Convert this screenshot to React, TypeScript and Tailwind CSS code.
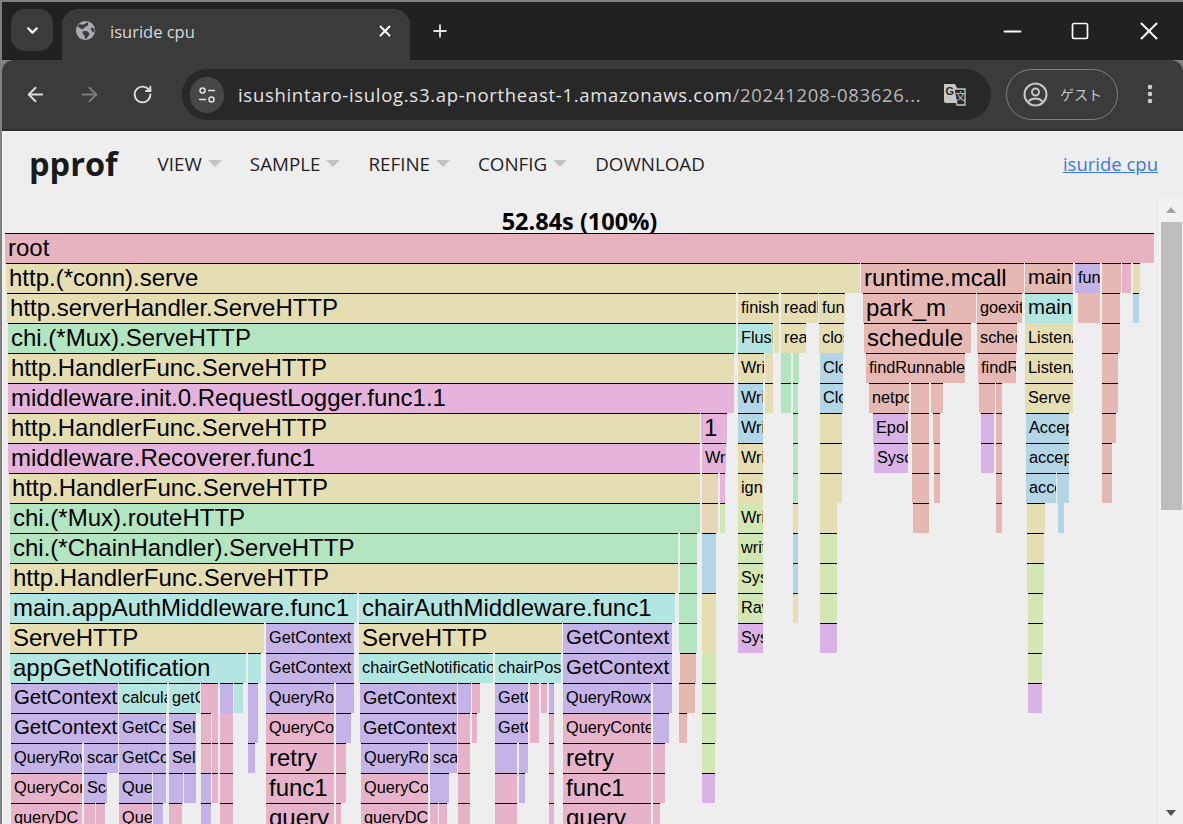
import { ArrowLeft, ArrowRight, ChevronDown, EllipsisVertical, Minus, Plus, RotateCw, Square, X } from "lucide-react";

const colors: Record<string, string> = {
  r: "bg-[#e6b3bf]",
  t: "bg-[#e6deb3]",
  g: "bg-[#b3e6c0]",
  v: "bg-[#e6b3dc]",
  c: "bg-[#b3e6e0]",
  l: "bg-[#c4b3e6]",
  s: "bg-[#e6b8b3]",
  b: "bg-[#b3d6e6]",
  n: "bg-[#d3e6b3]",
  u: "bg-[#d9b3e6]",
  o: "bg-[#e6d6b3]",
  k: "bg-[#e6b3ca]",
};

const sizes: Record<number, string> = {
  24: "text-[24px]",
  20: "text-[20.4px]",
  18: "text-[18.4px]",
  16: "text-[16.3px]",
};

// x1, x2, colour, label, font size, no top line (inlined frame)
type Frame = [number, number, string, string?, number?, boolean?];

const rows: Frame[][] = [
  [[5, 1154, "r", "root", 24]],
  [[6, 860, "t", "http.(*conn).serve", 24], [861, 1024, "s", "runtime.mcall", 24], [1025, 1073, "s", "main", 20], [1075, 1100, "l", "fun", 16], [1102, 1121, "s"], [1122, 1131, "k"], [1133, 1140, "t"]],
  [[7, 736, "t", "http.serverHandler.ServeHTTP", 24], [738, 779, "t", "finish", 16], [781, 818, "t", "readl", 16], [819, 845, "t", "fun", 16], [863, 976, "s", "park_m", 24], [977, 1022, "s", "goexit", 16], [1025, 1073, "c", "main", 20], [1078, 1100, "s", undefined, undefined, true], [1102, 1120, "s"], [1133, 1139, "b"]],
  [[8, 736, "g", "chi.(*Mux).ServeHTTP", 24], [738, 773, "c", "Flush", 16], [774, 779, "t", undefined, undefined, true], [781, 806, "t", "read", 16], [819, 844, "t", "close", 16], [864, 971, "s", "schedule", 24], [977, 1017, "s", "schedule", 16], [1025, 1073, "t", "ListenAndServe", 16, true], [1102, 1120, "s"]],
  [[8, 734, "t", "http.HandlerFunc.ServeHTTP", 24], [738, 764, "t", "Write", 16], [765, 773, "t", undefined, undefined, true], [781, 791, "g", undefined, undefined, true], [793, 799, "g", undefined, undefined, true], [820, 843, "b", "Close", 16, true], [866, 965, "s", "findRunnable", 16], [978, 1016, "s", "findRunnable", 16], [1025, 1073, "t", "ListenAndServe", 16], [1102, 1118, "s"]],
  [[8, 734, "v", "middleware.init.0.RequestLogger.func1.1", 24], [738, 763, "b", "Write", 16], [765, 773, "t"], [781, 791, "g"], [793, 798, "g"], [820, 843, "b", "Close", 16], [869, 909, "s", "netpoll", 16], [911, 929, "s"], [931, 943, "s"], [979, 995, "s"], [996, 1002, "s"], [1025, 1073, "t", "Serve", 16], [1102, 1118, "s"]],
  [[8, 700, "t", "http.HandlerFunc.ServeHTTP", 24], [701, 727, "v", "1", 24], [738, 763, "b", "Write", 16], [793, 798, "g"], [820, 842, "t"], [873, 908, "u", "EpollWait", 16], [911, 929, "s"], [933, 940, "s"], [981, 994, "u"], [996, 1002, "s"], [1026, 1069, "b", "Accept", 16], [1102, 1116, "s"]],
  [[8, 700, "v", "middleware.Recoverer.func1", 24], [702, 726, "v", "Write", 16], [738, 763, "t", "Write", 16], [793, 798, "g"], [820, 842, "t"], [874, 908, "u", "Syscall", 16], [912, 929, "s"], [934, 940, "s"], [981, 994, "u"], [996, 1002, "s"], [1026, 1069, "b", "accept", 16], [1102, 1112, "s"]],
  [[9, 700, "t", "http.HandlerFunc.ServeHTTP", 24], [702, 718, "o"], [720, 725, "v"], [738, 763, "t", "ignore", 16], [793, 798, "g"], [820, 842, "t"], [912, 929, "s"], [934, 940, "s"], [996, 1002, "s"], [1026, 1056, "b", "accept", 16], [1057, 1069, "b"], [1102, 1112, "s"]],
  [[10, 700, "g", "chi.(*Mux).routeHTTP", 24], [702, 718, "o"], [720, 725, "n"], [738, 763, "n", "Write", 16, true], [793, 798, "t"], [820, 837, "t", undefined, undefined, true], [913, 929, "s"], [996, 1002, "s"], [1027, 1045, "t"], [1058, 1064, "b", undefined, undefined, true]],
  [[10, 678, "g", "chi.(*ChainHandler).ServeHTTP", 24], [680, 697, "g"], [702, 716, "b"], [738, 763, "n", "write", 16], [793, 798, "b"], [820, 837, "n"], [1027, 1044, "t"]],
  [[10, 678, "t", "http.HandlerFunc.ServeHTTP", 24], [680, 697, "g"], [702, 716, "b", undefined, undefined, true], [738, 763, "n", "Syscall", 16], [793, 798, "b"], [820, 837, "n"], [1027, 1044, "n"]],
  [[10, 357, "c", "main.appAuthMiddleware.func1", 24], [359, 675, "c", "chairAuthMiddleware.func1", 24], [679, 697, "g"], [702, 716, "t"], [738, 763, "n", "RawSyscall", 16], [793, 798, "t"], [820, 837, "n"], [1028, 1043, "n"]],
  [[10, 264, "t", "ServeHTTP", 24], [266, 354, "l", "GetContext", 16], [359, 562, "t", "ServeHTTP", 24], [563, 672, "l", "GetContext", 20], [679, 697, "g"], [702, 716, "t", undefined, undefined, true], [738, 763, "u", "Syscall", 16], [820, 837, "u"], [1028, 1043, "n"]],
  [[10, 246, "c", "appGetNotification", 24], [248, 261, "c"], [266, 354, "l", "GetContext", 16], [359, 493, "c", "chairGetNotification", 16], [495, 561, "c", "chairPostCoordinate", 16], [563, 672, "l", "GetContext", 20], [680, 696, "s"], [702, 716, "n", undefined, undefined, true], [1028, 1042, "n"]],
  [[11, 118, "l", "GetContext", 20], [119, 167, "c", "calculate", 16], [169, 200, "c", "getChair", 16], [201, 218, "k"], [220, 233, "l"], [234, 243, "c"], [248, 258, "l"], [266, 334, "l", "QueryRowx", 16], [336, 354, "l"], [360, 457, "l", "GetContext", 18], [458, 471, "l"], [472, 480, "k"], [495, 528, "l", "GetContext", 16], [530, 539, "k"], [541, 547, "k"], [549, 554, "l"], [563, 651, "l", "QueryRowx", 16], [653, 672, "l"], [679, 695, "s"], [702, 716, "n"], [1028, 1042, "u"]],
  [[11, 118, "l", "GetContext", 20], [119, 166, "l", "GetContext", 16], [169, 196, "l", "SelectContext", 16], [201, 211, "k"], [212, 218, "k", undefined, undefined, true], [220, 233, "k", undefined, undefined, true], [248, 258, "l", undefined, undefined, true], [266, 334, "k", "QueryContext", 16], [336, 351, "l"], [360, 457, "l", "GetContext", 18], [458, 470, "k"], [472, 477, "k"], [495, 528, "l", "GetContext", 16], [530, 539, "k", undefined, undefined, true], [549, 554, "k"], [563, 651, "k", "QueryContext", 16], [653, 669, "l"], [679, 687, "s"], [702, 716, "n"]],
  [[11, 82, "l", "QueryRowContext", 16], [84, 118, "l", "scanAny", 16], [119, 166, "l", "GetContext", 16], [169, 196, "l", "SelectContext", 16], [201, 211, "k"], [212, 218, "k"], [220, 233, "k"], [248, 255, "l"], [266, 334, "k", "retry", 24], [336, 346, "k"], [361, 428, "l", "QueryRowContext", 16], [430, 457, "l", "scanAny", 16], [458, 470, "k"], [495, 517, "l"], [519, 528, "l"], [549, 554, "k"], [563, 651, "k", "retry", 24], [653, 665, "k"], [702, 715, "n"]],
  [[11, 82, "k", "QueryContext", 16], [84, 107, "l", "Scan", 16], [119, 152, "l", "QueryContext", 16], [153, 166, "l"], [169, 183, "l"], [184, 196, "l"], [201, 211, "l"], [212, 218, "k"], [220, 233, "k"], [266, 334, "k", "func1", 24], [336, 346, "k"], [361, 428, "k", "QueryContext", 16], [430, 449, "l"], [458, 470, "k"], [495, 517, "k"], [519, 525, "l"], [549, 554, "k"], [563, 651, "k", "func1", 24], [653, 665, "k"], [702, 715, "u"]],
  [[11, 82, "k", "queryDC", 16], [84, 95, "k"], [96, 105, "k"], [119, 152, "k", "QueryContext", 16], [153, 163, "l"], [169, 182, "k"], [201, 211, "l"], [220, 233, "k"], [266, 334, "k", "query", 24], [336, 341, "k"], [361, 428, "k", "queryDC", 16], [430, 438, "k"], [439, 447, "k"], [458, 470, "k"], [495, 517, "k"], [549, 554, "k"], [563, 651, "k", "query", 24], [653, 660, "k"]],
];

function GlobeIcon() {
  return (
    <svg width="21" height="21" viewBox="0 0 24 24" className="shrink-0">
      <circle cx="12" cy="12" r="11" fill="#a8abae" />
      <path d="M5 4.5c2 .5 3 1 5 .5s3-2 4.5-2.5c1 1 1 3-.5 4-2 1.5-3 1-4 3-.8 1.5-3 1-4 0-1.500-1.500-3-2-3.500-2z" fill="#3b3b3b" />
      <path d="M9 13c2-1 5-.5 6.500 1 1.500 1.500 1 3-.5 4.500-1 1-1.500 3-3 3.500-1-1.500-.5-3-1.500-4.500S7.500 14 9 13z" fill="#3b3b3b" />
      <path d="M18 9c1.500-.5 3 0 4 1 .3 1.500.2 3-.3 4.500C20 14 18 11 18 9z" fill="#3b3b3b" />
    </svg>
  );
}

function TuneIcon() {
  return (
    <svg width="18" height="18" viewBox="0 0 18 18" fill="none" stroke="#e3e3e3" strokeWidth="1.5">
      <circle cx="4.5" cy="4.5" r="2.5" />
      <path d="M10 4.5h7" />
      <circle cx="13.5" cy="13.5" r="2.5" />
      <path d="M1 13.5h7" />
    </svg>
  );
}

function TranslateIcon() {
  return (
    <svg width="25" height="25" viewBox="0 0 25 25">
      <path d="M2 2h11l2 4v15H4a2 2 0 0 1-2-2z" fill="#c7c7c7" />
      <text x="3.5" y="13" fontSize="11" fontWeight="700" fontFamily="Liberation Sans" fill="#2b2b2b">G</text>
      <path d="M12 7h11v16H15z" fill="#2b2b2b" stroke="#c7c7c7" strokeWidth="1.3" />
      <text x="13.5" y="18" fontSize="10" fontFamily="Noto Sans CJK JP" fill="#c7c7c7">文</text>
    </svg>
  );
}

function ProfileIcon() {
  return (
    <svg width="25" height="25" viewBox="0 0 25 25" fill="none" stroke="#c7c7c7" strokeWidth="2">
      <circle cx="12.5" cy="12.5" r="11" />
      <circle cx="12.5" cy="10" r="3.5" />
      <path d="M5.5 19.5c2-2.5 4.500-3 7-3s5 .5 7 3" />
    </svg>
  );
}

function Caret() {
  return <span className="ml-[6px] mt-[-2px] h-0 w-0 border-x-[7px] border-t-[7px] border-x-transparent border-t-[#c4c4c4]" />;
}

function FrameBox({ frame, row }: { frame: Frame; row: number }) {
  const [x1, x2, color, label, size, noTop] = frame;
  return (
    <div
      className={`absolute flex h-[30px] items-center overflow-hidden whitespace-nowrap pb-[2px] pl-[3px] text-black ${colors[color]} ${noTop ? "" : "border-t border-black"} ${size ? sizes[size] : ""}`}
      style={{ left: x1, top: row * 30, width: x2 - x1 }}
    >
      {label}
    </div>
  );
}

export default function App() {
  return (
    <div className="flex h-[824px] w-[1183px] flex-col overflow-hidden bg-[#808080] pl-[2px] pt-[2px] font-['Open_Sans',sans-serif]">
      {/* tab strip */}
      <div className="flex h-[58px] shrink-0 items-start bg-[#202221] pl-[9px] pt-[7px]">
        <div className="flex h-[42px] w-[42px] items-center justify-center rounded-[14px] bg-[#3b3b3b] text-white">
          <ChevronDown size={17} strokeWidth={3} />
        </div>
        <div className="ml-[9px] flex h-[51px] w-[348px] items-start rounded-t-[16px] bg-[#3b3b3b] pl-[13px] pt-[11px]">
          <GlobeIcon />
          <span className="ml-[14px] mt-[1px] text-[16.5px] leading-[21px] text-[#d8d8d8]">isuride cpu</span>
          <X size={18} strokeWidth={2.5} className="ml-[181px] mt-[2px] text-white" />
        </div>
        <Plus size={20} strokeWidth={2.2} className="ml-[20px] mt-[12px] text-[#e3e3e3]" />
        <div className="ml-auto mr-[19px] flex items-center gap-[44px] pt-[7px] text-white">
          <Minus size={27} strokeWidth={1.8} />
          <Square size={20} strokeWidth={2} />
          <X size={30} strokeWidth={1.6} />
        </div>
      </div>

      {/* toolbar */}
      <div className="flex h-[71px] shrink-0 items-start rounded-t-[12px] border-b-2 border-[#2e2e2e] bg-[#3b3b3b] bg-clip-padding pl-[22px] pt-[9px]">
        <div className="flex h-[51px] items-center gap-[31px]">
          <ArrowLeft size={23} className="text-[#dedede]" />
          <ArrowRight size={23} className="text-[#7d7d7d]" />
          <RotateCw size={21} strokeWidth={2.2} className="text-[#dedede]" />
        </div>
        <div className="ml-[29px] flex h-[51px] w-[809px] items-center rounded-full bg-[#282828] pl-[8px] pr-[11px]">
          <div className="flex h-[36px] w-[34px] items-center justify-center rounded-full bg-[#474747]">
            <TuneIcon />
          </div>
          <span className="ml-[14px] text-[18.5px] tracking-[0.7px] text-[#e3e3e3]">
            isushintaro-isulog.s3.ap-northeast-1.amazonaws.com
            <span className="text-[#b8b8b8]">/20241208-083626...</span>
          </span>
          <span className="ml-auto mr-[13px]">
            <TranslateIcon />
          </span>
        </div>
        <div className="ml-[15px] flex h-[51px] w-[112px] items-center rounded-full border border-[#808080] pl-[16px]">
          <ProfileIcon />
          <span className="ml-[12px] font-['Noto_Sans_CJK_JP',sans-serif] text-[14px] text-[#c7c7c7]">ゲスト</span>
        </div>
        <EllipsisVertical size={24} strokeWidth={2.6} className="ml-[20px] mt-[13px] text-[#d0d0d0]" />
      </div>

      {/* page */}
      <div className="flex min-h-0 flex-1 flex-col bg-[#eeeeee]">
        <div className="flex h-[66px] shrink-0 items-center pl-[27px] pr-[25px] text-[#1f1f1f]">
          <span className="mr-[40px] text-[32.5px] font-bold leading-none text-[#1a1a1a]">pprof</span>
          <div className="flex items-center gap-[28px] text-[18.8px]">
            <span className="flex items-center">VIEW<Caret /></span>
            <span className="flex items-center">SAMPLE<Caret /></span>
            <span className="flex items-center">REFINE<Caret /></span>
            <span className="flex items-center">CONFIG<Caret /></span>
            <span>DOWNLOAD</span>
          </div>
          <a className="ml-auto text-[18.5px] text-[#3b78e7] underline">isuride cpu</a>
        </div>
        <div className="flex min-h-0 flex-1">
          <div className="relative flex-1 overflow-hidden font-['Liberation_Sans',sans-serif]">
            <div className="pt-[11px] text-center font-['Open_Sans',sans-serif] text-[23.5px] font-bold leading-[26px] text-black">
              <span className="relative left-[-1px]">52.84s (100%)</span>
            </div>
            <div className="absolute left-[-2px] top-[36px] h-[640px] w-[1160px]">
              {rows.map((row, i) => row.map((frame, j) => <FrameBox key={i + "-" + j} frame={frame} row={i} />))}
            </div>
          </div>
          {/* scrollbar */}
          <div className="flex w-[24px] shrink-0 flex-col items-center bg-[#f1f1f1] pt-[10px]">
            <span className="h-0 w-0 border-x-[5px] border-b-[6px] border-x-transparent border-b-[#a3a3a3]" />
            <div className="mt-[9px] h-[288px] w-[21px] bg-[#bdbdbd]" />
            <span className="mt-auto mb-[8px] h-0 w-0 border-x-[5.5px] border-t-[6px] border-x-transparent border-t-[#505050]" />
          </div>
        </div>
      </div>
    </div>
  );
}
